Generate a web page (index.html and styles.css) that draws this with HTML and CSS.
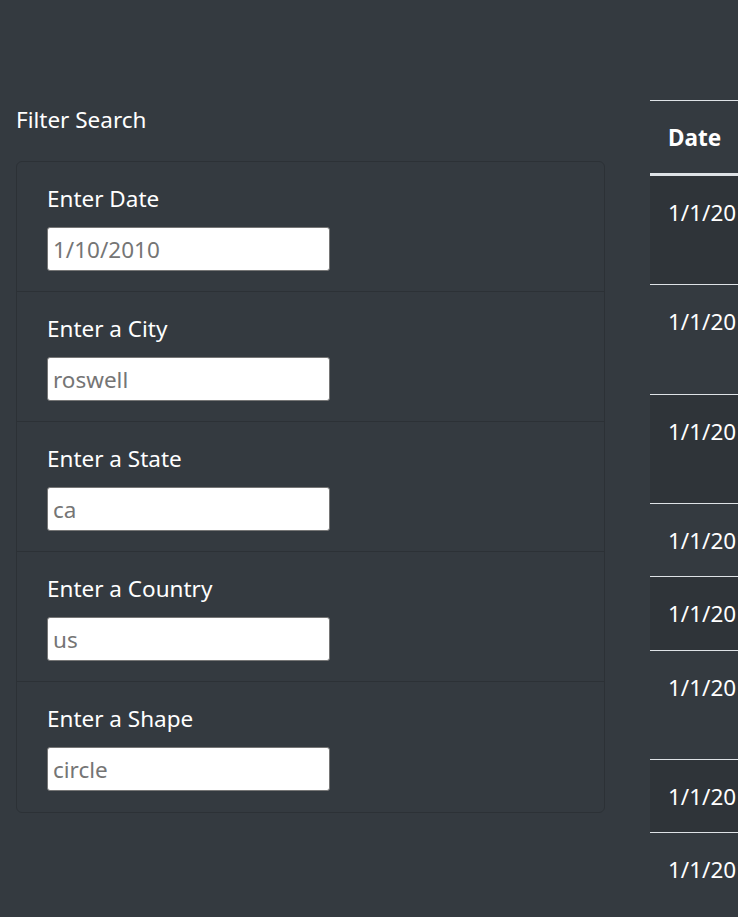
FILE: index.html
```html
<!DOCTYPE html>
<html lang="en">
<head>
<meta charset="utf-8">
<title>UFO Sightings</title>
<link rel="stylesheet" href="styles.css">
</head>
<body>
<div class="page">
  <aside class="sidebar">
    <h2 class="filter-title">Filter Search</h2>
    <form class="card">
      <ul class="list-group">
        <li class="list-item">
          <label class="field-label" for="datetime">Enter Date</label>
          <input class="field-input" id="datetime" type="text" placeholder="1/10/2010">
        </li>
        <li class="list-item">
          <label class="field-label" for="city">Enter a City</label>
          <input class="field-input" id="city" type="text" placeholder="roswell">
        </li>
        <li class="list-item">
          <label class="field-label" for="state">Enter a State</label>
          <input class="field-input" id="state" type="text" placeholder="ca">
        </li>
        <li class="list-item">
          <label class="field-label" for="country">Enter a Country</label>
          <input class="field-input" id="country" type="text" placeholder="us">
        </li>
        <li class="list-item">
          <label class="field-label" for="shape">Enter a Shape</label>
          <input class="field-input" id="shape" type="text" placeholder="circle">
        </li>
      </ul>
    </form>
  </aside>
  <section class="results">
    <table class="ufo-table">
      <thead>
        <tr>
          <th>Date</th><th>City</th><th>State</th><th>Country</th><th>Shape</th><th>Duration</th><th>Comments</th>
        </tr>
      </thead>
      <tbody>
        <tr class="odd"><td>1/1/2010</td><td>benton</td><td>ar</td><td>us</td><td>circle</td><td>5 mins.</td><td>4 bright green circles high in the sky<br>going in circles then one bright green light</td></tr>
        <tr><td>1/1/2010</td><td>bonita</td><td>ca</td><td>us</td><td>light</td><td>13 minutes</td><td>Three bright red lights witnessed<br>floating stationary over San Diego</td></tr>
        <tr class="odd"><td>1/1/2010</td><td>el cajon</td><td>ca</td><td>us</td><td>triangle</td><td>5 minutes</td><td>Bright red light moving north to north<br>west from El Cajon, CA</td></tr>
        <tr><td>1/1/2010</td><td>clarksville</td><td>tn</td><td>us</td><td>unknown</td><td>20 min.</td><td>Red light in the sky</td></tr>
        <tr class="odd"><td>1/1/2010</td><td>lebanon</td><td>ct</td><td>us</td><td>circle</td><td>5 minutes</td><td>Lights on New Year's Eve</td></tr>
        <tr><td>1/1/2010</td><td>quincy</td><td>ma</td><td>us</td><td>fireball</td><td>5 minutes</td><td>Orange lights in the sky over<br>Quincy, Massachusetts</td></tr>
        <tr class="odd"><td>1/1/2010</td><td>winston-salem</td><td>nc</td><td>us</td><td>light</td><td>2 minutes</td><td>Orange glowing lights</td></tr>
        <tr><td>1/1/2010</td><td>woodbury</td><td>mn</td><td>us</td><td>circle</td><td>1 minute</td><td>Orange circle of light</td></tr>
      </tbody>
    </table>
  </section>
</div>
</body>
</html>
```
FILE: styles.css
```css
html, body {
  margin: 0;
  padding: 0;
  background: #343a40;
  overflow: hidden;
}

body {
  font-family: "Noto Sans", "Open Sans", sans-serif;
  font-size: 22.5px;
  line-height: 36px;
  color: #ffffff;
}

.page {
  display: flex;
  align-items: flex-start;
  padding: 100px 0 0 16px;
  width: 2000px;
}

.sidebar {
  flex: none;
  width: 589px;
}

.filter-title {
  margin: 2px 0 23px 0;
  font-size: 22.5px;
  font-weight: 400;
  line-height: 36px;
}

.card {
  margin: 0;
  border: 1px solid #2c3136;
  border-radius: 6px;
}

.list-group {
  list-style: none;
  margin: 0;
  padding: 0;
}

.list-item {
  padding: 19px 30px 20px;
  border-top: 1px solid #2c3136;
}

.list-item:first-child {
  border-top: none;
}

.list-item:last-child {
  padding-bottom: 21px;
}

.field-label {
  display: block;
  margin-bottom: 10px;
}

.field-input {
  display: block;
  box-sizing: border-box;
  width: 283px;
  height: 44px;
  margin: 0;
  padding: 0 5px;
  border: 1px solid #767676;
  border-radius: 3px;
  background: #ffffff;
  font-family: "Noto Sans", "Open Sans", sans-serif;
  font-size: 22.5px;
  color: #333;
}

.field-input::placeholder {
  color: #757575;
}

.results {
  flex: none;
  margin-left: 45px;
}

.ufo-table {
  border-collapse: collapse;
  white-space: nowrap;
}

.ufo-table th,
.ufo-table td {
  padding: 19px 18px 17px;
  text-align: left;
  vertical-align: top;
  border-top: 1px solid #dee2e6;
}

.ufo-table td {
  line-height: 36.2px;
}

.ufo-table th {
  font-weight: 700;
  border-bottom: 3px solid #dee2e6;
}

.ufo-table tr.odd td {
  background: #2f3439;
}
```
